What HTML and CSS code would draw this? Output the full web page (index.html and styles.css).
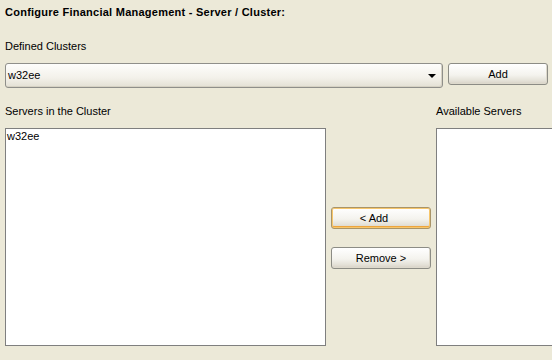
FILE: index.html
```html
<!DOCTYPE html>
<html lang="en">
<head>
  <meta charset="UTF-8">
  <meta name="viewport" content="width=device-width, initial-scale=1.0">
  <title>Configure Financial Management</title>
  <link rel="stylesheet" href="styles.css">
</head>
<body>
  <h1 class="title">Configure Financial Management - Server / Cluster:</h1>

  <div class="label first">Defined Clusters</div>
  <div class="cluster-row">
    <div class="combo">
      <span class="combo-value">w32ee</span>
      <span class="combo-arrow"></span>
    </div>
    <button class="btn add-cluster">Add</button>
  </div>

  <div class="servers">
    <div class="label">Servers in the Cluster</div>
    <div></div>
    <div class="label">Available Servers</div>

    <div class="list">
      <div class="list-item">w32ee</div>
    </div>
    <div class="move-buttons">
      <button class="btn hover pad-add">&lt; Add</button>
      <button class="btn">Remove &gt;</button>
    </div>
    <div class="list"></div>
  </div>
</body>
</html>
```

FILE: styles.css
```css
/* page base, xp-ish dialog look */
body {
  margin: 0;
  padding: 6px 0 0 5px;
  background: #ece9d8;
  font-family: "Liberation Sans", Arial, sans-serif;
  font-size: 11px;
  line-height: 13px;
  color: #000;
  overflow: hidden;
  height: 354px;
}

.title {
  margin: 0 0 21px 0;
  font-size: 11px;
  font-weight: bold;
  line-height: 13px;
  letter-spacing: 0.25px;
}

.label {
  height: 13px;
}

.first {
  margin-bottom: 10px;
}

/* combo + add button */
.cluster-row {
  display: flex;
  gap: 5px;
  align-items: flex-start;
}

.combo {
  box-sizing: border-box;
  width: 438px;
  height: 25px;
  border: 1px solid #8f8f8a;
  border-radius: 3px;
  background: linear-gradient(#fdfdfb, #f3f1ea 60%, #e3e0d4);
  box-shadow: inset -1px -1px 0 #d6d2c4;
  display: flex;
  align-items: center;
  padding: 0 6px 0 2px;
}

.combo-value {
  flex: 1;
}

.combo-arrow {
  width: 0;
  height: 0;
  border-left: 4px solid transparent;
  border-right: 4px solid transparent;
  border-top: 4px solid #000;
  margin-top: 1px;
}

.btn {
  box-sizing: border-box;
  width: 100px;
  height: 22px;
  padding: 0;
  border: 1px solid #8c8c85;
  border-radius: 3px;
  background: linear-gradient(#ffffff, #f4f3ee 55%, #e3e0d6 85%, #d6d0c5);
  box-shadow: inset -1px -1px 0 #ddd9cc;
  font-family: "Liberation Sans", Arial, sans-serif;
  font-size: 11px;
  color: #000;
}

.hover {
  border-color: #a99468;
  box-shadow: inset 0 0 0 1px #f7c66b, inset 0 -2px 0 #eea53c;
}

.pad-add {
  padding-right: 14px;
}

/* lists area */
.servers {
  display: grid;
  grid-template-columns: 321px 110px 130px;
  grid-template-rows: 13px 218px;
  row-gap: 10px;
  margin-top: 17px;
}

.list {
  border: 1px solid #7f7f7f;
  background: #fff;
}

.list-item {
  padding: 1px 0 0 1px;
}

.move-buttons {
  display: flex;
  flex-direction: column;
  gap: 18px;
  padding: 79px 0 0 5px;
}
```
